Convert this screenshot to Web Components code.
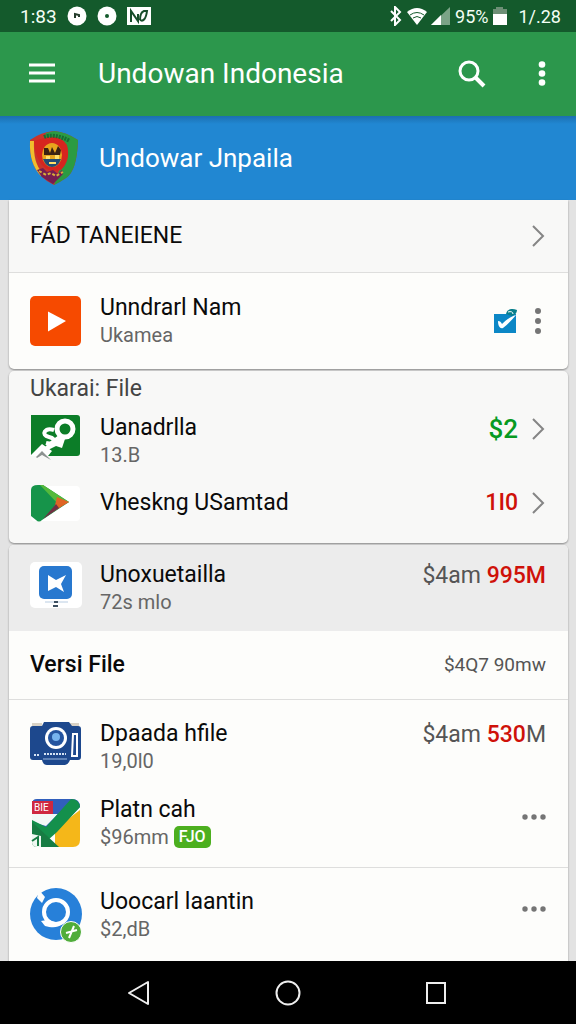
<!DOCTYPE html>
<html lang="id">
<head>
<meta charset="utf-8">
<meta name="viewport" content="width=device-width, initial-scale=1">
<title>Undowan Indonesia</title>
<style>

  body{
    margin:0;
    min-height:100vh;

    display:flex;
    flex-direction:column;

    font-family:Roboto, "Liberation Sans", sans-serif;
    background:#e3e3e3;
  }

  main{
    flex:1;

    display:flex;
    flex-direction:column;
    gap:2px;

    padding:0 8px 0 9px;
  }

  svg{
    display:block;
  }

  list-card:last-child{
    flex:1;
  }

  .green{
    color:#079a22;
  }

  .red{
    color:#cf1109;
  }

  .strong{
    font-weight:500;
  }

</style>
</head>
<body>

  <status-bar>
    <span slot="time">1:83</span>
    <span slot="battery">95%</span>
    <span slot="date">1/.28</span>
  </status-bar>

  <app-bar>Undowan Indonesia</app-bar>

  <profile-bar>Undowar Jnpaila</profile-bar>

  <main>

    <list-card class="first">
      <list-row plain muted divider style="--row-height:73px">
        FÁD TANEIENE
        <chevron-link slot="end" label="FÁD TANEIENE"></chevron-link>
      </list-row>

      <list-row style="--row-height:96px">
        <svg slot="icon" width="52" height="50" viewBox="0 0 52 50">
          <rect width="51" height="50" rx="5" fill="#f64a00"/>
          <path d="M18 15.500 36 25 18 35.500z" fill="#fff"/>
        </svg>
        Unndrarl Nam
        <span slot="sub">Ukamea</span>
        <icon-button slot="end" label="Buka">
          <svg width="24" height="26" viewBox="0 0 24 26">
            <path d="M0 6h22v19H0z" fill="#0c87c6"/>
            <path d="M12 6c1-5 6-6 11-4 0 3-2 5-5 6z" fill="#087f8c"/>
            <path d="M14 4c3-1 5 0 5 2" fill="none" stroke="#fff"/>
            <path d="M4 13c2 0 3 1 4 3 4-4 8-7 14-9-4 5-8 9-13 13-3 1-5-2-5-7z" fill="#fff"/>
          </svg>
        </icon-button>
        <icon-button slot="end" label="Menu">
          <svg width="16" height="26" viewBox="0 0 16 26" fill="#757575">
            <circle cx="8" cy="3" r="3"/><circle cx="8" cy="13" r="3"/><circle cx="8" cy="23" r="3"/>
          </svg>
        </icon-button>
      </list-row>
    </list-card>

    <list-card muted class="second">
      <section-title>Ukarai: File</section-title>

      <list-row top style="--row-height:67px">
        <svg slot="icon" width="52" height="46" viewBox="0 0 52 46">
          <path d="M1 0h46q3 0 3 3v35q0 3-3 3H1z" fill="#0c7d28"/>
          <g fill="none" stroke="#fff">
            <circle cx="35" cy="14" r="8" stroke-width="5"/>
            <path d="M24 15c-9-3-14 5-5 7s4 8-3 6" stroke-width="4"/>
          </g>
          <path d="m14 33 8-8 7-5 6 4-3 9-6-2-8 4z" fill="#fff"/>
          <path d="M0 41 12 29 22 36 18 41z" fill="#fff"/>
          <path d="m6 42 6-6 9 9-9-5-5 3z" fill="#8d9291"/>
        </svg>
        Uanadrlla
        <span slot="sub">13.B</span>
        <span slot="end" class="green strong big">$2</span>
        <chevron-link slot="end" label="Uanadrlla"></chevron-link>
      </list-row>

      <list-row style="--row-height:58px">
        <svg slot="icon" width="52" height="37" viewBox="0 0 52 37">
          <rect x="1" y="1" width="49" height="35" rx="4" fill="#fff"/>
          <path d="M1 5Q1 0 8 0h5l26 17L12 35q-3 3-6 0L1 31z" fill="#16944a"/>
          <path d="M10 0h3l26 17-9 4z" fill="#55b93b"/>
          <path d="m27 12 12 5-18 11 4-8z" fill="#df6425"/>
          <path d="m26 19 3 4-16 11z" fill="#713044"/>
        </svg>
        Vheskng USamtad
        <span slot="end" class="red strong">1I0</span>
        <chevron-link slot="end" label="Vheskng USamtad"></chevron-link>
      </list-row>
    </list-card>

    <list-card class="last">
      <list-row top shaded style="--row-height:86px">
        <svg slot="icon" width="52" height="46" viewBox="0 0 52 46">
          <rect width="52" height="46" rx="5" fill="#fff"/>
          <rect x="9" y="4" width="33" height="33" rx="5" fill="#2878cf"/>
          <path d="M18 13 26 18 36 13 31 22 34 30 26 25 18 29z" fill="#fff"/>
          <path d="M15 40h23" stroke="#b9cde2"/>
          <path d="M24 39h4v2h-4zM23 43h5v2h-5z" fill="#3c4f60"/>
        </svg>
        Unoxuetailla
        <span slot="sub">72s mlo</span>
        <span slot="end">$4am <b class="red strong">995M</b></span>
      </list-row>

      <row-group divider>
        <list-row plain bold style="--row-height:68px">
          Versi File
          <span slot="end" class="small">$4Q7 90mw</span>
        </list-row>
      </row-group>

      <row-group padded divider>
        <list-row top style="--row-height:76px">
          <svg slot="icon" width="52" height="44" viewBox="0 0 52 44">
            <path d="M2 1h10v5H2zM40 1h9v5h-9z" fill="#d8d2c6"/>
            <path d="M3 4h9l2-4h25l3 4h6q3 0 3 3v28q0 3-3 3h-8q-2 5-5 5H17q-4 0-5-5H3q-3 0-3-3V7q0-3 3-3z" fill="#1d488d"/>
            <circle cx="26" cy="16" r="11" fill="#fff"/>
            <circle cx="26" cy="16" r="8" fill="#24549f"/>
            <circle cx="26" cy="15" r="4" fill="#77b4ef"/>
            <path d="M43 12h4v22h-5z" fill="none" stroke="#fff" stroke-width="2"/>
            <path d="M14 32h22M4 33h6" stroke="#d5e3f4" stroke-width="2" stroke-dasharray="2 1"/>
            <path d="M13 37h24" stroke="#9cb9df"/>
          </svg>
          Dpaada hfile
          <span slot="sub">19,0l0</span>
          <span slot="end">$4am <b class="red strong">530</b>M</span>
        </list-row>

        <list-row raised style="--row-height:76px">
          <svg slot="icon" width="52" height="50" viewBox="0 0 52 50">
            <path d="M7 1h35q8 0 8 8L25 34 2 24V6q0-5 5-5z" fill="#315fbc"/>
            <path d="M2 16h26L16 28 2 24z" fill="#f3f8f7"/>
            <path d="M50 12v30q0 7-7 7H25V31z" fill="#f5b719"/>
            <path d="M2 22 16 29 41 1q8 0 9 8L27 34 18 42 2 30z" fill="#14904c"/>
            <path d="m2 24 27 25H7q-5 0-5-5z" fill="#177c43"/>
            <path d="M2 36 11 38v11H7q-5 0-5-5z" fill="#eef7f1"/>
            <path d="m2 43 6-4v9" fill="none" stroke="#177c43" stroke-width="2"/>
            <path d="M2 3h21v13H2z" fill="#cf2840"/>
            <text x="4" y="13" font-size="10" fill="#fff">BIE</text>
          </svg>
          Platn cah
          <span slot="sub">$96mm</span>
          <tag-badge slot="sub">FJO</tag-badge>
          <icon-button slot="end" label="Lainnya">
            <svg width="24" height="14" viewBox="0 0 24 14" fill="#757575">
              <circle cx="3" cy="7" r="2.700"/><circle cx="12" cy="7" r="2.700"/><circle cx="21" cy="7" r="2.700"/>
            </svg>
          </icon-button>
        </list-row>
      </row-group>

      <list-row raised style="--row-height:93px">
        <svg slot="icon" width="52" height="56" viewBox="0 0 52 56">
          <circle cx="26" cy="27" r="26" fill="#2780d9"/>
          <path d="M9 3 15 10 12 16 7 11z" fill="#fdfdfb"/>
          <circle cx="26" cy="25" r="12" fill="none" stroke="#fff" stroke-width="4"/>
          <path d="m17 33-6 1 4 5c7 2 13 2 17-2z" fill="#fff"/>
          <circle cx="41" cy="45" r="10.500" fill="#50ad3a" stroke="#fff"/>
          <path d="m39 51 5-12M36 46l11-3" stroke="#fff" stroke-width="2"/>
        </svg>
        Uoocarl laantin
        <span slot="sub">$2,dB</span>
        <icon-button slot="end" label="Lainnya">
          <svg width="24" height="14" viewBox="0 0 24 14" fill="#757575">
            <circle cx="3" cy="7" r="2.700"/><circle cx="12" cy="7" r="2.700"/><circle cx="21" cy="7" r="2.700"/>
          </svg>
        </icon-button>
      </list-row>
    </list-card>

  </main>

  <nav-bar></nav-bar>

<script>

class StatusBar extends HTMLElement {

  constructor(){
    super();

    this.attachShadow({ mode:"open" });

    this.shadowRoot.innerHTML = `
      <style>

        :host{
          display:flex;
          align-items:center;
          justify-content:space-between;

          height:32px;
          padding:0 15px 0 20px;

          font-size:19px;
          color:#f3fff5;
          background:#145a2c;
        }

        .side{
          display:flex;
          align-items:center;
          gap:10px;
        }

        .right{
          gap:4px;
          font-size:18px;
        }

        .date{
          margin-left:6px;
        }

        svg{
          display:block;
        }

      </style>

      <div class="side">
        <slot name="time"></slot>
        <svg width="20" height="20" viewBox="0 0 20 20">
          <circle cx="10" cy="10" r="9.500" fill="#fff"/>
          <path d="M8 11V8l4 1v2M8 8v4" fill="none" stroke="#233b2a" stroke-width="2"/>
        </svg>
        <svg width="20" height="20" viewBox="0 0 20 20">
          <circle cx="10" cy="10" r="9.500" fill="#fff"/>
          <circle cx="10" cy="10" r="2" fill="#145a2c"/>
        </svg>
        <svg width="24" height="18" viewBox="0 0 24 18">
          <path d="M0 0h24v18H0z" fill="#fff"/>
          <path d="M4 15V4l7 10V7M13 13c3 2 6-1 7-9h-3c-3 1-4 4-4 9" fill="none" stroke="#174d2a" stroke-width="2"/>
        </svg>
      </div>

      <div class="side right">
        <svg width="14" height="20" viewBox="0 0 14 20">
          <path d="m2 5 9 9-5 5V1l5 5-9 9" fill="none" stroke="#fff" stroke-width="2"/>
        </svg>
        <svg width="20" height="18" viewBox="0 0 20 18">
          <path d="M0 5Q10-3 20 5L10 18z" fill="#fff"/>
          <path d="M3 8q7-5 14 0M6 11q4-3 8 0" fill="none" stroke="#145a2c"/>
        </svg>
        <svg width="20" height="18" viewBox="0 0 20 18">
          <path d="M19 0v18H0z" fill="#7ba487"/>
          <path d="M10 8v10H0z" fill="#fff"/>
        </svg>
        <slot name="battery"></slot>
        <svg width="16" height="20" viewBox="0 0 16 20">
          <path d="M1 3h3V1h7v2h4v6H1z" fill="#6d8f76"/>
          <path d="M1 8h14v11H1z" fill="#fff"/>
        </svg>
        <span class="date"><slot name="date"></slot></span>
      </div>
    `;
  }

}

class IconButton extends HTMLElement {

  constructor(){
    super();

    this.attachShadow({ mode:"open" });

    this.shadowRoot.innerHTML = `
      <style>

        :host{
          display:block;
        }

        button{
          display:block;
          padding:0;
          border:none;
          background:none;
          cursor:pointer;
        }

      </style>

      <button type="button"><slot></slot></button>
    `;
  }

  connectedCallback(){
    this.shadowRoot.querySelector("button").setAttribute("aria-label", this.getAttribute("label"));
  }

}

class ChevronLink extends HTMLElement {

  constructor(){
    super();

    this.attachShadow({ mode:"open" });

    this.shadowRoot.innerHTML = `
      <style>

        :host, a, svg{
          display:block;
        }

      </style>

      <a href="#">
        <svg width="16" height="24" viewBox="0 0 16 24">
          <path d="m3 2 10 10L3 22" fill="none" stroke="#858585" stroke-width="2"/>
        </svg>
      </a>
    `;
  }

  connectedCallback(){
    this.shadowRoot.querySelector("a").setAttribute("aria-label", this.getAttribute("label"));
  }

}

class AppBar extends HTMLElement {

  constructor(){
    super();

    this.attachShadow({ mode:"open" });

    this.shadowRoot.innerHTML = `
      <style>

        :host{
          display:flex;
          align-items:center;

          height:84px;
          padding:0 26px 0 29px;

          color:#fff;
          background:#2c974c;
        }

        h1{
          flex:1;
          margin:0 0 0 42px;

          font-size:28px;
          font-weight:400;
          line-height:32px;
        }

        .more{
          margin-left:48px;
        }

        svg{
          display:block;
        }

      </style>

      <icon-button label="Menu">
        <svg width="27" height="22" viewBox="0 0 27 22">
          <path d="M0 2h26M0 10h26M0 18h26" stroke="#fff" stroke-width="3"/>
        </svg>
      </icon-button>

      <h1><slot></slot></h1>

      <icon-button label="Cari">
        <svg width="28" height="28" viewBox="0 0 28 28" fill="none" stroke="#fff">
          <circle cx="11" cy="11" r="9" stroke-width="3"/>
          <path d="m17 17 9 9" stroke-width="4"/>
        </svg>
      </icon-button>

      <icon-button class="more" label="Opsi lain">
        <svg width="16" height="26" viewBox="0 0 16 26" fill="#fff">
          <circle cx="8" cy="3.500" r="3.300"/><circle cx="8" cy="12.500" r="3.300"/><circle cx="8" cy="21.500" r="3.300"/>
        </svg>
      </icon-button>
    `;
  }

}

class ProfileBar extends HTMLElement {

  constructor(){
    super();

    this.attachShadow({ mode:"open" });

    this.shadowRoot.innerHTML = `
      <style>

        :host{
          display:flex;
          align-items:center;
          gap:20px;

          height:84px;
          padding:0 29px;

          color:#fff;
          background:linear-gradient(#1b6fb0, #2187d2 8px);
        }

        h2{
          margin:0;

          font-size:26px;
          font-weight:400;
          line-height:32px;
        }

        svg{
          display:block;
        }

      </style>

      <svg width="50" height="54" viewBox="0 0 50 54">
        <path d="M25 0q12 1 24 9-1 31-12 38-6 4-12 7-7-3-13-9Q0 33 1 9 12 1 25 0z" fill="#c9342b"/>
        <path d="M25 0q12 1 24 9-1 31-12 38-6 4-12 7l5-14L39 25 35 10 15 9 17 2z" fill="#2b9b42"/>
        <path d="M1 10h4q-1 22 8 31l-1 4Q0 33 1 10z" fill="#f0bd2d"/>
        <path d="M5 10 18 6q14-2 20 8 4 15-6 25l-9 1Q7 36 5 10z" fill="#d6251f"/>
        <path d="M15 6q10-4 26 4" fill="none" stroke="#176d32" stroke-width="4" stroke-dasharray="2 1"/>
        <ellipse cx="23" cy="24" rx="10" ry="12" fill="#e8a51d"/>
        <path d="M15 17h4l2 5 2-6 3 6 3-7 3 4-1 5H15z" fill="#3b2112"/>
        <path d="M14 28h18q-3 8-9 8t-9-8z" fill="#244b72"/>
        <path d="M17 25h4v3h-4zM26 24h4v4h-4zM20 31h7v2h-7z" fill="#ffe06a"/>
        <path d="m8 39 6-2 4 4 6-2 5 4 4-4 1 4-10 10-11-7z" fill="#761d50"/>
        <path d="m10 40 7 4 5-2 5 3 7-4" fill="none" stroke="#d8ae39" stroke-width="2" stroke-dasharray="3 2"/>
      </svg>

      <h2><slot></slot></h2>
    `;
  }

}

class ListCard extends HTMLElement {

  constructor(){
    super();

    this.attachShadow({ mode:"open" });

    this.shadowRoot.innerHTML = `
      <style>

        :host{
          display:block;
          overflow:hidden;

          border-radius:5px;
          background:#fdfdfb;
          box-shadow:0 1px 2px rgba(0, 0, 0, .4);
        }

        :host([muted]){
          padding-bottom:11px;
          background:#f8f8f7;
        }

        :host(.first){
          border-radius:0 0 5px 5px;
        }

        :host(.last){
          border-radius:5px 5px 0 0;
        }

      </style>

      <slot></slot>
    `;
  }

}

class SectionTitle extends HTMLElement {

  constructor(){
    super();

    this.attachShadow({ mode:"open" });

    this.shadowRoot.innerHTML = `
      <style>

        :host{
          display:block;
          padding:4px 21px;
        }

        h3{
          margin:0;

          font-size:23px;
          font-weight:400;
          line-height:28px;
          color:#444;
        }

      </style>

      <h3><slot></slot></h3>
    `;
  }

}

class RowGroup extends HTMLElement {

  constructor(){
    super();

    this.attachShadow({ mode:"open" });

    this.shadowRoot.innerHTML = `
      <style>

        :host{
          display:block;
        }

        :host([padded]){
          padding:9px 0 6px;
        }

        :host([divider]){
          border-bottom:1px solid #dededd;
        }

      </style>

      <slot></slot>
    `;
  }

}

class ListRow extends HTMLElement {

  constructor(){
    super();

    this.attachShadow({ mode:"open" });

    this.shadowRoot.innerHTML = `
      <style>

        :host{
          box-sizing:border-box;
          min-height:var(--row-height, 76px);

          display:flex;
          align-items:center;

          padding:0 22px 0 21px;
        }

        :host([divider]){
          border-bottom:1px solid #dededd;
        }

        :host([muted]){
          background:#f8f8f7;
        }

        :host([shaded]){
          background:#ececec;
        }

        .icon{
          width:52px;
          margin-right:18px;
        }

        :host([top]) .icon{
          margin-bottom:6px;
        }

        :host([plain]) .icon{
          display:none;
        }

        .info{
          flex:1;
        }

        .title{
          font-size:23px;
          line-height:28px;
          color:#0a0a0a;
        }

        :host([bold]) .title{
          font-weight:500;
        }

        .sub{
          display:flex;
          align-items:center;
          gap:5px;

          font-size:20px;
          line-height:26px;
          color:#666;
        }

        .end{
          display:flex;
          align-items:center;
          gap:12px;

          font-size:23px;
          line-height:28px;
          color:#555;
        }

        :host([top]) .end{
          margin-bottom:24px;
        }

        :host([raised]) .end{
          margin-bottom:12px;
        }

        ::slotted(.small){
          font-size:19px;
        }

        ::slotted(.big){
          font-size:26px;
        }

      </style>

      <div class="icon"><slot name="icon"></slot></div>

      <div class="info">
        <div class="title"><slot></slot></div>
        <div class="sub"><slot name="sub"></slot></div>
      </div>

      <div class="end"><slot name="end"></slot></div>
    `;
  }

  connectedCallback(){

    // rows with no second line keep the title centred
    if(!this.querySelector("[slot=sub]")){
      this.shadowRoot.querySelector(".sub").remove();
    }

  }

}

class TagBadge extends HTMLElement {

  constructor(){
    super();

    this.attachShadow({ mode:"open" });

    this.shadowRoot.innerHTML = `
      <style>

        :host{
          padding:0 5px;
          border-radius:5px;

          font-size:16px;
          font-weight:500;
          line-height:22px;

          color:#fff;
          background:#4caf1f;
        }

      </style>

      <slot></slot>
    `;
  }

}

class NavBar extends HTMLElement {

  constructor(){
    super();

    this.attachShadow({ mode:"open" });

    this.shadowRoot.innerHTML = `
      <style>

        :host{
          display:block;
          position:relative;
          background:#000;
        }

        nav{
          height:63px;
          padding:0 64px;

          display:grid;
          grid-template-columns:repeat(3, 1fr);
          place-items:center;
        }

        svg{
          display:block;
          fill:none;
          stroke:#eee;
          stroke-width:2;
        }

      </style>

      <nav>
        <icon-button label="Kembali">
          <svg width="26" height="26" viewBox="0 0 26 26"><path d="M22 2v22L3 13z" stroke-linejoin="round"/></svg>
        </icon-button>
        <icon-button label="Beranda">
          <svg width="26" height="26" viewBox="0 0 26 26"><circle cx="13" cy="13" r="11.500"/></svg>
        </icon-button>
        <icon-button label="Terkini">
          <svg width="26" height="26" viewBox="0 0 26 26"><path d="M3 3h18v20H3z"/></svg>
        </icon-button>
      </nav>
    `;
  }

}

customElements.define("icon-button", IconButton);
customElements.define("chevron-link", ChevronLink);
customElements.define("status-bar", StatusBar);
customElements.define("app-bar", AppBar);
customElements.define("profile-bar", ProfileBar);
customElements.define("list-card", ListCard);
customElements.define("section-title", SectionTitle);
customElements.define("row-group", RowGroup);
customElements.define("list-row", ListRow);
customElements.define("tag-badge", TagBadge);
customElements.define("nav-bar", NavBar);

</script>
</body>
</html>
